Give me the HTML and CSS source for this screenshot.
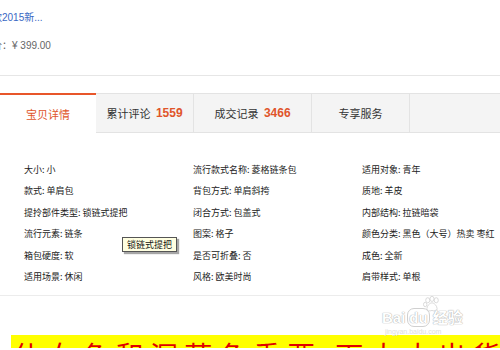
FILE: index.html
```html
<!DOCTYPE html>
<html lang="zh-CN">
<head>
    <meta charset="UTF-8">
    <meta name="viewport" content="width=device-width, initial-scale=1.0">
    <title>宝贝详情</title>
    <link rel="stylesheet" href="styles.css">
</head>
<body>

    <div class="summary">
        <div class="item-title">款2015新...</div>
        <div class="item-price">价：¥ 399.00</div>
    </div>

    <!-- Pestañas -->
    <ul class="tabs">
        <li class="tab active">宝贝详情</li>
        <li class="tab">累计评论 <b>1559</b></li>
        <li class="tab wide">成交记录 <b>3466</b></li>
        <li class="tab">专享服务</li>
        <li class="tab rest"></li>
    </ul>

    <!-- Atributos -->
    <div class="attrs">
        <div>大小: 小</div>
        <div>流行款式名称: 菱格链条包</div>
        <div>适用对象: 青年</div>
        <div>款式: 单肩包</div>
        <div>背包方式: 单肩斜挎</div>
        <div>质地: 羊皮</div>
        <div>提拎部件类型: 锁链式提把</div>
        <div>闭合方式: 包盖式</div>
        <div>内部结构: 拉链暗袋</div>
        <div class="has-tip">流行元素: 链条<span class="tooltip">锁链式提把</span></div>
        <div>图案: 格子</div>
        <div>颜色分类: 黑色（大号）热卖 枣红</div>
        <div>箱包硬度: 软</div>
        <div>是否可折叠: 否</div>
        <div>成色: 全新</div>
        <div>适用场景: 休闲</div>
        <div>风格: 欧美时尚</div>
        <div>肩带样式: 单根</div>
    </div>

    <div class="footer">
        <div class="watermark">
            <svg class="paw" width="20" height="17" viewBox="0 0 22 20">
                <ellipse cx="6" cy="5" rx="2.4" ry="3" />
                <ellipse cx="11" cy="3.4" rx="2.4" ry="3" />
                <ellipse cx="16" cy="5" rx="2.4" ry="3" />
                <ellipse cx="3" cy="10" rx="2" ry="2.6" />
                <path d="M11 8c3 0 6 4 6 7 0 3-3 3-6 2-3 1-6 1-6-2 0-3 3-7 6-7z" />
            </svg>
            <div class="wm-logo">Bai<span class="du">du</span>经验</div>
            <div class="wm-url">jingyan.baidu.com</div>
        </div>
        <div class="banner">仕 女 色 和 深 蓝 色 重 要<i class="dot"></i>下 大 大 出 货 ，其 实</div>
    </div>

</body>
</html>
```

FILE: styles.css
```css
/* Estilo general */
body {
    font-family: "Liberation Sans", "Noto Sans CJK SC", sans-serif;
    margin: 0;
    padding: 0;
    background-color: #fff;
    color: #333;
    overflow: hidden;
}

.summary {
    padding-top: 11px;
    height: 64px;
    border-bottom: 1px solid #e6e6e6;
    font-size: 10px;
    line-height: 14px;
}

.item-title {
    color: #3a68c4;
    margin-left: -8px;
}

.item-price {
    color: #666;
    margin-top: 14px;
    margin-left: -8px;
}

.tabs {
    display: flex;
    list-style: none;
    margin: 17px 0 0 0;
    padding: 0;
    height: 40px;
}

.tab {
    width: 97px;
    background-color: #f4f4f4;
    border-top: 1px solid #e3e3e3;
    border-bottom: 1px solid #e3e3e3;
    border-right: 1px solid #e3e3e3;
    display: flex;
    align-items: center;
    justify-content: center;
    font-family: "Noto Sans CJK SC", sans-serif;
    font-size: 11px;
    color: #333;
    white-space: pre;
}

.tab.wide {
    width: 117px;
}

.tab.rest {
    flex: 1;
    border-right: none;
}

.tab b {
    font-family: "Liberation Sans", sans-serif;
    font-size: 12px;
    color: #e0552b;
    margin-left: 3px;
}

.tab.active {
    width: 96px;
    background-color: #fff;
    border-top: 2px solid #e8562a;
    border-right: none;
    border-bottom: none;
    color: #e0552b;
}

.attrs {
    display: grid;
    grid-template-columns: 169px 169px 1fr;
    grid-auto-rows: 21.4px;
    padding: 26px 0 8px 24px;
    height: 128px;
    border-bottom: 1px solid #ececec;
    font-family: "Noto Sans CJK SC", sans-serif;
    font-size: 9px;
    line-height: 21.4px;
    color: #222;
}

.has-tip {
    position: relative;
}

.tooltip {
    position: absolute;
    left: 98px;
    top: 14px;
    padding: 0 4px;
    line-height: 13px;
    background-color: #ffffe1;
    border: 1px solid #555;
    box-shadow: 2px 2px 1px rgba(0, 0, 0, 0.35);
    color: #111;
}

.footer {
    position: relative;
    padding-top: 39px;
}

.watermark {
    position: absolute;
    left: 382px;
    top: 0;
    width: 92px;
    color: #fff;
    white-space: nowrap;
}

.paw {
    display: block;
    margin: 0 0 0 40px;
    fill: #fff;
    stroke: #d0d0d0;
    stroke-width: 0.9;
}

.wm-logo {
    font-family: "Liberation Sans", "Noto Sans CJK SC", sans-serif;
    font-weight: bold;
    font-size: 15px;
    line-height: 15px;
    margin-top: -3px;
    text-shadow: 0 0 1px #aaa, 0 0 1px #aaa;
}

.wm-logo .du {
    border: 1px solid #d0d0d0;
    border-radius: 7px;
    padding: 0 1px;
    margin: 0 3px 0 2px;
}

.wm-url {
    font-size: 7px;
    line-height: 8px;
    margin: 3px 0 0 3px;
    color: #ddd;
}

.banner {
    margin-left: 11px;
    height: 13px;
    overflow: hidden;
    background-color: #ffff00;
    color: #e00000;
    font-family: "Noto Sans CJK SC", sans-serif;
    font-size: 28px;
    line-height: 40px;
    white-space: nowrap;
    padding-left: 2px;
}

.banner .dot {
    display: inline-block;
    width: 12px;
    height: 12px;
    background-color: #e00000;
    margin: 0 8px 0 0;
}
```
